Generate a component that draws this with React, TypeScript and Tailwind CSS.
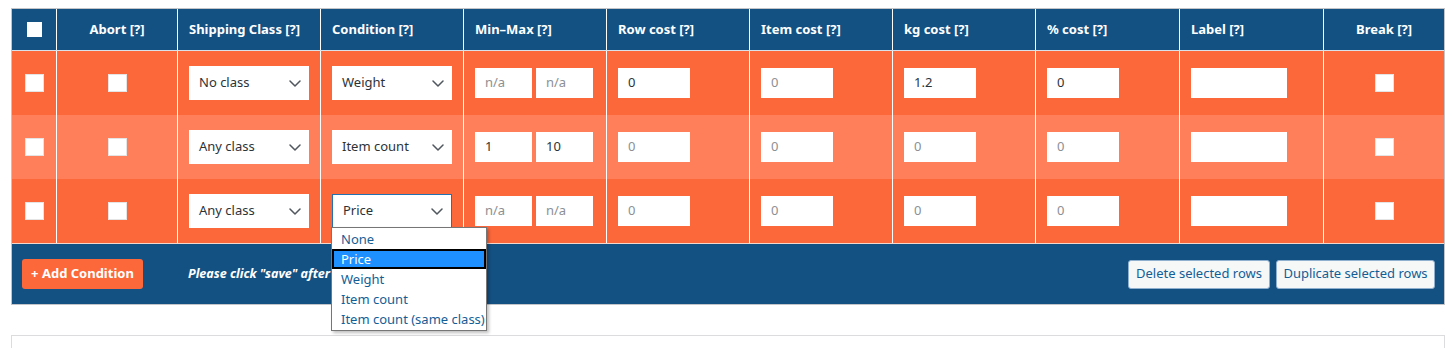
import React from "react";

const FONT = { fontFamily: '"Noto Sans", "Open Sans", sans-serif' };

function Chevron() {
  return (
    <svg width="12" height="7" viewBox="0 0 12 7" fill="none">
      <path d="M1 1 L6 6 L11 1" stroke="#50575e" strokeWidth="1.5" strokeLinecap="round" strokeLinejoin="round" />
    </svg>
  );
}

function Check({ small }: { small?: boolean }) {
  return small ? (
    <span className="block w-[15px] h-[15px] bg-white" />
  ) : (
    <span className="block w-[19px] h-[18px] bg-white border border-[#e4e4e4]" />
  );
}

function Select({ value, focus }: { value: string; focus?: boolean }) {
  return (
    <div
      className={
        "w-[122px] h-[34px] bg-white flex items-center justify-between pl-[10px] pr-[8px] text-[13px] text-[#2c3338] " +
        (focus ? "border border-[#2271b1]" : "")
      }
    >
      <span>{value}</span>
      <Chevron />
    </div>
  );
}

function Input({ value, w, ph }: { value: string; w: string; ph?: boolean }) {
  return (
    <div
      className={
        "h-[30px] bg-white flex items-center pl-[10px] text-[13px] " +
        w +
        " " +
        (ph ? "text-[#8c8f94]" : "text-[#2c3338]")
      }
    >
      {value}
    </div>
  );
}

type Row = {
  bg: string;
  cls: string;
  cond: string;
  min: [string, boolean];
  max: [string, boolean];
  row: [string, boolean];
  item: [string, boolean];
  kg: [string, boolean];
  pct: [string, boolean];
  focus?: boolean;
};

const rows: Row[] = [
  {
    bg: "bg-[#fd683b]",
    cls: "No class",
    cond: "Weight",
    min: ["n/a", true],
    max: ["n/a", true],
    row: ["0", false],
    item: ["0", true],
    kg: ["1.2", false],
    pct: ["0", false],
  },
  {
    bg: "bg-[#ff7f5a]",
    cls: "Any class",
    cond: "Item count",
    min: ["1", false],
    max: ["10", false],
    row: ["0", true],
    item: ["0", true],
    kg: ["0", true],
    pct: ["0", true],
  },
  {
    bg: "bg-[#fd683b]",
    cls: "Any class",
    cond: "Price",
    min: ["n/a", true],
    max: ["n/a", true],
    row: ["0", true],
    item: ["0", true],
    kg: ["0", true],
    pct: ["0", true],
    focus: true,
  },
];

const GRID =
  "grid grid-cols-[44px_121px_143px_143px_143px_143px_143px_143px_144px_144px_121px]";
const CELL = "border-l border-white flex items-center px-[11px]";

const headers = [
  "Shipping Class [?]",
  "Condition [?]",
  "Min–Max [?]",
  "Row cost [?]",
  "Item cost [?]",
  "kg cost [?]",
  "% cost [?]",
  "Label [?]",
];

export default function App() {
  return (
    <div className="bg-white w-[1452px] h-[348px] overflow-hidden pt-[8px] pl-[11px]" style={FONT}>
      <div className="w-[1434px] border border-[#c3c4c7]">
        {/* header */}
        <div className={GRID + " h-[42px] bg-[#135183] border-b border-[#d9e2ea] text-white font-bold text-[13px]"}>
          <div className="flex items-center justify-center">
            <Check small />
          </div>
          <div className="border-l border-white flex items-center justify-center">Abort [?]</div>
          {headers.map((h) => (
            <div key={h} className={CELL}>
              {h}
            </div>
          ))}
          <div className="border-l border-white flex items-center justify-center">Break [?]</div>
        </div>
        {/* rows */}
        <div className="border-b border-[#f3d6cc]">
          {rows.map((r, i) => (
            <div key={i} className={GRID + " h-[64px] " + r.bg}>
              <div className="flex items-center justify-center">
                <Check />
              </div>
              <div className="border-l border-white flex items-center justify-center">
                <Check />
              </div>
              <div className={CELL}>
                <Select value={r.cls} />
              </div>
              <div className={CELL + " relative"}>
                <Select value={r.cond} focus={r.focus} />
                {r.focus && (
                  <div className="absolute left-[10px] top-[48px] z-10 w-[156px] bg-white border border-[#767676] shadow-[2px_2px_3px_rgba(0,0,0,0.25)] text-[13px] text-[#135e96] py-[1px]">
                    <div className="h-[20px] leading-[20px] pl-[9px]">None</div>
                    <div className="h-[20px] leading-[16px] pl-[7px] bg-[#1e90ff] text-white border-2 border-black">Price</div>
                    <div className="h-[20px] leading-[20px] pl-[9px]">Weight</div>
                    <div className="h-[20px] leading-[20px] pl-[9px]">Item count</div>
                    <div className="h-[20px] leading-[20px] pl-[9px] whitespace-nowrap">Item count (same class)</div>
                  </div>
                )}
              </div>
              <div className={CELL + " gap-[4px]"}>
                <Input value={r.min[0]} ph={r.min[1]} w="w-[57px]" />
                <Input value={r.max[0]} ph={r.max[1]} w="w-[57px]" />
              </div>
              <div className={CELL}>
                <Input value={r.row[0]} ph={r.row[1]} w="w-[72px]" />
              </div>
              <div className={CELL}>
                <Input value={r.item[0]} ph={r.item[1]} w="w-[72px]" />
              </div>
              <div className={CELL}>
                <Input value={r.kg[0]} ph={r.kg[1]} w="w-[72px]" />
              </div>
              <div className={CELL}>
                <Input value={r.pct[0]} ph={r.pct[1]} w="w-[72px]" />
              </div>
              <div className={CELL}>
                <Input value="" w="w-[96px]" />
              </div>
              <div className="border-l border-white flex items-center justify-center">
                <Check />
              </div>
            </div>
          ))}
        </div>
        {/* footer */}
        <div className="h-[60px] bg-[#135183] flex items-center pl-[10px] pr-[9px]">
          <div className="h-[30px] w-[121px] rounded-[3px] bg-[#fd683b] text-white font-bold text-[13px] flex items-center justify-center">
            + Add Condition
          </div>
          <div className="ml-[45px] text-white font-bold italic text-[12.5px] whitespace-nowrap">
            Please click "save" after
          </div>
          <div className="ml-auto flex gap-[6px]">
            <div className="h-[29px] w-[142px] bg-[#f6f7f7] border border-[#8fb1cf] rounded-[3px] text-[#135e96] text-[13px] flex items-center justify-center">
              Delete selected rows
            </div>
            <div className="h-[29px] w-[159px] bg-[#f6f7f7] border border-[#8fb1cf] rounded-[3px] text-[#135e96] text-[13px] flex items-center justify-center">
              Duplicate selected rows
            </div>
          </div>
        </div>
      </div>
      <div className="mt-[30px] w-[1434px] h-[60px] border border-[#dcdcde]" />
    </div>
  );
}
